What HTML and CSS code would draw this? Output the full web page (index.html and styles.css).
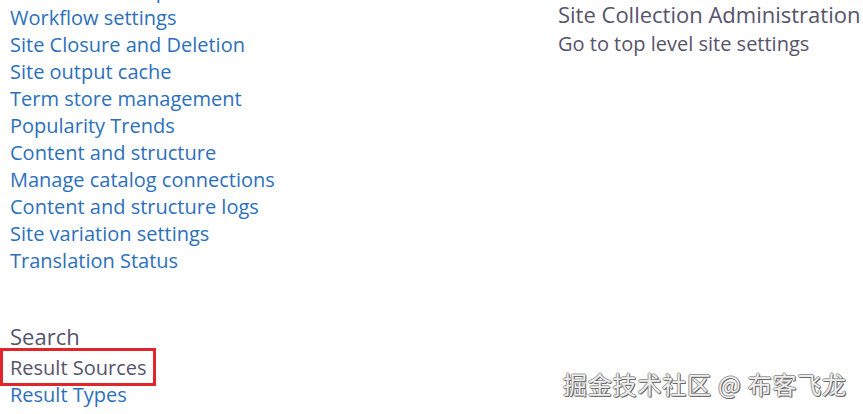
FILE: index.html
```html
<!DOCTYPE html>
<html>
<head>
<meta charset="utf-8">
<link rel="stylesheet" href="styles.css">
</head>
<body>
<div class="page">
  <div class="col left">
    <ul class="links first">
      <li><a class="lnk" href="#">Sites and workspaces</a></li>
      <li><a class="lnk" href="#">Workflow settings</a></li>
      <li><a class="lnk" href="#">Site Closure and Deletion</a></li>
      <li><a class="lnk" href="#">Site output cache</a></li>
      <li><a class="lnk" href="#">Term store management</a></li>
      <li><a class="lnk" href="#">Popularity Trends</a></li>
      <li><a class="lnk" href="#">Content and structure</a></li>
      <li><a class="lnk" href="#">Manage catalog connections</a></li>
      <li><a class="lnk" href="#">Content and structure logs</a></li>
      <li><a class="lnk" href="#">Site variation settings</a></li>
      <li><a class="lnk" href="#">Translation Status</a></li>
    </ul>
    <h3 class="title search-title">Search</h3>
    <ul class="links">
      <li><a class="lnk visited boxed" href="#">Result Sources</a></li>
      <li><a class="lnk" href="#">Result Types</a></li>
      <li><a class="lnk" href="#">Query Rules</a></li>
    </ul>
  </div>
  <div class="col right">
    <h3 class="title">Site Collection Administration</h3>
    <ul class="links">
      <li><a class="lnk visited" href="#">Go to top level site settings</a></li>
    </ul>
  </div>
</div>
<div class="watermark">掘金技术社区 @ 布客飞龙</div>
</body>
</html>
```
FILE: styles.css
```css
html, body {
  margin: 0;
  padding: 0;
  background: #ffffff;
  overflow: hidden;
  height: 414px;
}
body {
  font-family: "Open Sans", "Noto Sans", sans-serif;
}
.page {
  display: flex;
  padding-left: 10px;
}
.col.left {
  width: 548px;
  margin-top: -23px;
}
.col.right {
  flex: 1;
  white-space: nowrap;
}
.links {
  list-style: none;
  margin: 0;
  padding: 0;
}
.links li {
  height: 27px;
  line-height: 27px;
  white-space: nowrap;
}
.lnk {
  font-size: 20px;
  color: #2c70bc;
  text-decoration: none;
}
.lnk.visited {
  color: #56536b;
}
.boxed {
  display: inline-block;
  margin: -2px -5px -1px -6px;
  padding: 2px 5px 1px 6px;
  outline: 3px solid #e0262b;
  outline-offset: 1px;
}
.title {
  margin: 0;
  font-weight: normal;
  font-size: 22px;
  color: #56536b;
  line-height: 28px;
}
.search-title {
  margin-top: 48px;
  height: 32px;
}
.right .title {
  margin-top: 0;
  height: 30px;
}
.watermark {
  position: absolute;
  left: 563px;
  top: 367px;
  font-family: "Noto Sans CJK SC", sans-serif;
  font-size: 24px;
  line-height: 34px;
  color: #eeeeee;
  letter-spacing: 0.8px;
  text-shadow: 1px 1px 0 #6a6a6a, -1px 0 0 #9a9a9a, 0 -1px 0 #9a9a9a, 1px 0 0 #8a8a8a, 0 1px 0 #8a8a8a;
}
```
